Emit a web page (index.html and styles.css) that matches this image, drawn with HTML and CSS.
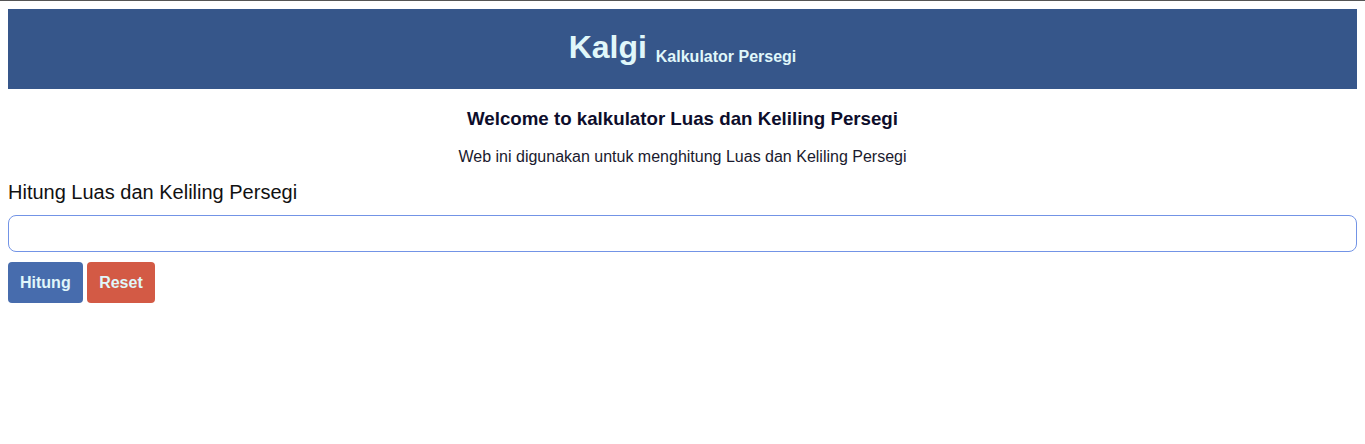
FILE: index.html
```html
<!DOCTYPE html>
<html lang="id">
<head>
<meta charset="utf-8">
<title>Kalgi - Kalkulator Persegi</title>
<link rel="stylesheet" href="styles.css">
</head>
<body>
<header class="header">
  <h1 class="brand">Kalgi <small class="tagline">Kalkulator Persegi</small></h1>
</header>
<main class="main">
  <section class="intro">
    <h2 class="intro-title">Welcome to kalkulator Luas dan Keliling Persegi</h2>
    <p class="intro-text">Web ini digunakan untuk menghitung Luas dan Keliling Persegi</p>
  </section>
  <section class="calc">
    <h3 class="calc-title">Hitung Luas dan Keliling Persegi</h3>
    <input class="calc-input" type="number">
    <div class="actions">
      <button class="btn btn-primary" type="button">Hitung</button>
      <button class="btn btn-danger" type="button">Reset</button>
    </div>
  </section>
</main>
</body>
</html>
```
FILE: styles.css
```css
html {
  border-top: 1px solid #555555;
}
body {
  margin: 8px;
  font-family: "Liberation Sans", Arial, sans-serif;
  color: #111111;
  background: #ffffff;
}
.header {
  background: #36568a;
  height: 80px;
  display: flex;
  align-items: center;
  justify-content: center;
}
.brand {
  margin: 0;
  font-size: 32px;
  font-weight: bold;
  color: #e0f7fa;
  line-height: 37px;
  padding-top: 6px;
}
.tagline {
  font-size: 16px;
  font-weight: bold;
  vertical-align: -4px;
}
.main {
  display: flex;
  flex-direction: column;
}
.intro {
  text-align: center;
}
.intro-title {
  margin: 19px 0 0;
  font-size: 18.72px;
  line-height: 22px;
  font-weight: bold;
  color: #0d0d2b;
}
.intro-text {
  margin: 18px 0 0;
  font-size: 16px;
  line-height: 18px;
  color: #1a1a2e;
}
.calc {
  display: flex;
  flex-direction: column;
}
.calc-title {
  margin: 15px 0 0;
  font-size: 20px;
  line-height: 23px;
  font-weight: normal;
  color: #111111;
}
.calc-input {
  margin-top: 11px;
  box-sizing: border-box;
  width: 100%;
  height: 37px;
  border: 1px solid #7394e6;
  border-radius: 8px;
  padding: 0 10px;
  font-family: inherit;
  font-size: 16px;
  outline: none;
}
.actions {
  display: flex;
  gap: 4px;
  margin-top: 10px;
}
.btn {
  border: none;
  border-radius: 4px;
  padding: 11px 12px;
  font-family: inherit;
  font-size: 16px;
  line-height: 19px;
  font-weight: bold;
  color: #e0f7fa;
  cursor: pointer;
}
.btn-primary {
  background: #476cad;
}
.btn-danger {
  background: #d35a45;
  padding: 11px 12.5px;
}
```
